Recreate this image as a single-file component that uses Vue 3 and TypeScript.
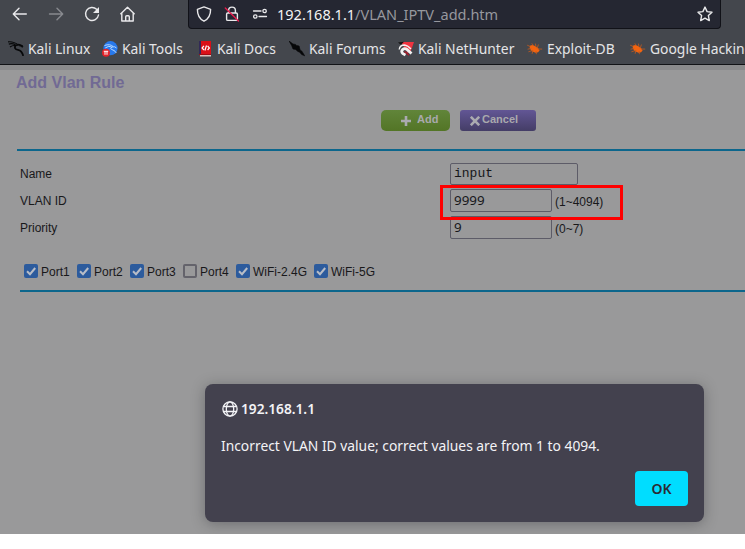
<script setup lang="ts">
import { ref } from 'vue'

interface Bookmark { label: string; icon: string; width: number }
interface Port { label: string; checked: boolean; width: number }

const bookmarks: Bookmark[] = [
  { label: 'Kali Linux', icon: 'dragon', width: 94 },
  { label: 'Kali Tools', icon: 'tools', width: 95 },
  { label: 'Kali Docs', icon: 'docs', width: 92 },
  { label: 'Kali Forums', icon: 'forums', width: 109 },
  { label: 'Kali NetHunter', icon: 'hunter', width: 129 },
  { label: 'Exploit-DB', icon: 'bug', width: 103 },
  { label: 'Google Hacking', icon: 'bug', width: 150 },
]
const ports = ref<Port[]>([
  { label: 'Port1', checked: true, width: 53 },
  { label: 'Port2', checked: true, width: 53 },
  { label: 'Port3', checked: true, width: 53 },
  { label: 'Port4', checked: false, width: 53 },
  { label: 'WiFi-2.4G', checked: true, width: 78 },
  { label: 'WiFi-5G', checked: true, width: 70 },
])
const name = ref('input')
const vlan = ref('9999')
const priority = ref('9')
</script>

<template>
  <div class="window">
    <header class="chrome">
      <div class="nav">
        <div class="nav-buttons">
          <svg viewBox="0 0 16 16"><path d="M14.3 8H1.5M7 2.2L1.3 8L7 13.8" /></svg>
          <svg class="disabled" viewBox="0 0 16 16"><path d="M1.5 8h13M9 2.2L14.7 8L9 13.8" /></svg>
          <svg viewBox="0 0 16 16"><path d="M12.6 3.3A6.5 6.5 0 1 0 14.5 9" /><path class="solid" d="M15 1v6H9z" /></svg>
          <svg viewBox="0 0 16 16"><path d="M.8 7.8L7.5 1.2l6.7 6.6M1.8 7v8h11.4V7M5.7 15v-4.2q0-1 1-1h1.6q1 0 1 1V15" /></svg>
        </div>
        <div class="urlbar">
          <svg class="shield" viewBox="0 0 16 16"><path d="M8 .9L14.6 3.3C14.7 9 12.6 13 8 15.2C3.4 13 1.3 9 1.4 3.3z" /></svg>
          <svg class="lock" viewBox="0 0 16 16"><path d="M4.6 7V4.5a3.4 3.4 0 0 1 6.8 0V7M3.8 7h8.4q1.2 0 1.2 1.2v5q0 1.2-1.2 1.2H3.8q-1.2 0-1.2-1.2v-5Q2.6 7 3.8 7z" /><path class="slash" d="M1.3 2l13.2 13" /></svg>
          <svg class="perm" viewBox="0 0 16 16"><path d="M1.5 5h7.5M7 10.5h7.5" /><circle cx="12.6" cy="5" r="1.7" /><circle cx="3.3" cy="10.5" r="1.7" /></svg>
          <div class="url"><span class="host">192.168.1.1</span>/VLAN_IPTV_add.htm</div>
          <svg class="star" viewBox="0 0 16 16"><path d="M8 1.1l2.1 4.5 4.9.6-3.6 3.4.9 5L8 12.2l-4.3 2.4.9-5L1 6.2l4.9-.6z" /></svg>
        </div>
      </div>
      <nav class="bookmarks">
        <div v-for="b in bookmarks" :key="b.label" class="bookmark" :style="{ width: b.width + 'px' }">
          <svg v-if="b.icon === 'dragon'" viewBox="0 0 16 16" fill="none" stroke="#070809">
            <path d="M0 .8Q6 .3 10.5 4.2M.8 3.1Q4 2 7.5 3.8M2 6Q5 3.8 8 4.8" stroke-width="1.2" />
            <path d="M7.6 3.9Q5.5 8.3 10 8.8Q14 9.5 15.2 14.9" stroke-width="1.8" />
            <path d="M8 4.5Q12 2.3 14.8 6.3M11.4 4.3l3.4.8" stroke-width="1.7" />
          </svg>
          <svg v-else-if="b.icon === 'tools'" viewBox="0 0 16 16">
            <circle cx="8.5" cy="7.2" r="7.1" fill="#2779ed" />
            <path d="M2.5 4.5Q8 2.5 11 5.5M3.2 7Q7 4 10 6.2Q7 8 11 9Q13.5 10 14.3 12M10 6q3-1 4.5 1" fill="none" stroke="#b8daff" stroke-width="1" />
            <circle cx="4" cy="11.8" r="4" fill="#e52228" />
            <path d="M1.8 10.3h4.4M3 10.3v3.5M5 10.3v3.5" stroke="#fff" />
          </svg>
          <svg v-else-if="b.icon === 'docs'" viewBox="0 0 16 16">
            <path d="M2 0h12v14H2z" fill="#d91018" /><path d="M2 0h2v14H2z" fill="#322a57" />
            <path d="M3 14h11v1.5H3z" fill="#d9bdb9" /><path d="M2 13h12v1H2z" fill="#9f0a13" />
            <path d="M6.9 4.8L5.1 7l1.8 2M10.6 4.8L12.4 7l-1.8 2M9.5 4.5l-1.6 5" fill="none" stroke="#fff" stroke-width="1.2" />
          </svg>
          <svg v-else-if="b.icon === 'forums'" viewBox="0 0 16 16">
            <path d="M0 0l4 3 2.5.4 1 1 2.6.6 1 4 1.8 1.2 2.8 4.6-3-1.2-2-2.4-2-.8-2-2L4 8 2.6 4.4z" fill="#060708" stroke="#060708" stroke-width=".6" />
          </svg>
          <svg v-else-if="b.icon === 'hunter'" viewBox="0 0 16 16">
            <path d="M3 1h13l-3.2 9-3 2z" fill="#ef3340" /><path d="M0 1.5l6-.8-3 3z" fill="#111" />
            <path d="M13.5 12.5L9 8.4Q6.6 6.8 4.6 8.6T5 12.7L7.5 14" fill="none" stroke="#f2f2f2" stroke-width="2.8" />
            <path d="M1.2 8.5Q1.8 4 6.5 4Q9.5 4.3 13 8" fill="none" stroke="#f2f2f2" stroke-width="1.3" />
            <path d="M6.5 10.5l4.5 3.7" stroke="#b11625" stroke-width="1.3" />
          </svg>
          <svg v-else viewBox="0 0 16 16">
            <path d="M2.8 4.8L5.2 4 8 5l3 2.2 1.6 2.4-1.5 1.6-2.5.6-3.8-1.5L2.8 7.6z" fill="#f36410" />
            <path d="M.2 4.2l3.2 1.4M.6 8.2l3.6-.7M1.4 10.8l4.4-1.4M4.8 2.4l2 2.7M8.4 2.6l.6 3.2M11.4 3.5l-1.2 4M11 8l4.2.1M6 9.4l-.9 3.4M9 10l.4 3.2" fill="none" stroke="#c75a1c" stroke-width=".8" />
          </svg>
          <span>{{ b.label }}</span>
        </div>
      </nav>
    </header>

    <main class="page">
      <h1>Add Vlan Rule</h1>
      <div class="actions">
        <button class="add"><svg viewBox="0 0 10 10"><path d="M5 0v10M0 5h10" /></svg>Add</button>
        <button class="cancel"><svg viewBox="0 0 10 10"><path d="M.8 .8l8.4 8.4M9.2 .8L.8 9.2" /></svg>Cancel</button>
      </div>
      <div class="rule top"></div>
      <form class="form" @submit.prevent>
        <label>Name</label>
        <div class="field"><input v-model="name" class="name"></div>
        <label>VLAN ID</label>
        <div class="field"><input v-model="vlan"><span>(1~4094)</span></div>
        <label>Priority</label>
        <div class="field"><input v-model="priority"><span>(0~7)</span></div>
      </form>
      <div class="ports">
        <div v-for="p in ports" :key="p.label" class="port" :style="{ width: p.width + 'px' }">
          <span class="box" :class="{ checked: p.checked }" @click="p.checked = !p.checked">
            <svg v-if="p.checked" viewBox="0 0 14 14"><path d="M3 7.2l3 3L11.2 4" /></svg>
          </span><span class="port-label">{{ p.label }}</span>
        </div>
      </div>
      <div class="rule bottom"></div>
    </main>

    <div class="highlight"></div>
    <section class="dialog" role="alertdialog">
      <div class="origin">
        <svg viewBox="0 0 16 16"><circle cx="8" cy="8" r="7.1" /><ellipse cx="8" cy="8" rx="3.7" ry="7.1" /><path d="M1.5 5.5h13M1.5 10.5h13" /></svg>
        <span>192.168.1.1</span>
      </div>
      <p>Incorrect VLAN ID value; correct values are from 1 to 4094.</p>
      <button class="ok">OK</button>
    </section>
  </div>
</template>

<style>
body { background: #fff; overflow: hidden; }
</style>
<style scoped>
* { box-sizing: border-box; }
svg { display: block; flex: none; }
button { border: 0; padding: 0; }
.window { position: relative; width: 745px; height: 534px; overflow: hidden; background: #99999a; }
.chrome { height: 65px; background: #44474d; border-bottom: 1px solid #121316; font-family: "Noto Sans", sans-serif; color: #e4e5e7; }
.nav { height: 33px; display: flex; }
.nav-buttons { width: 188px; height: 28px; padding-left: 12px; display: flex; gap: 20px; align-items: center; }
.nav svg { width: 16px; height: 16px; fill: none; stroke: #e9e9eb; stroke-width: 1.4; stroke-linejoin: round; stroke-linecap: round; }
.nav svg.disabled { stroke: #888a8f; }
.nav svg .solid { fill: #e9e9eb; stroke: none; }
.nav svg .slash { stroke: #e51c4c; }
.urlbar { width: 533px; height: 29px; padding: 0 7px; display: flex; align-items: center; background: #252732; border: 1px solid #111218; border-top: 0; border-radius: 0 0 4px 4px; }
.lock { margin-left: 12px; }
.nav .perm { margin-left: 12px; stroke-width: 1.3; }
.url { margin-left: 9px; flex: 1; font-size: 14.53px; line-height: 28px; padding-bottom: 1px; color: #96979e; white-space: nowrap; }
.host { color: #f4f4f5; }
.bookmarks { height: 31px; padding-left: 8px; display: flex; align-items: center; }
.bookmark { flex: none; display: flex; align-items: center; gap: 4px; font-size: 13.86px; line-height: 20px; white-space: nowrap; }
.bookmark svg { width: 16px; height: 16px; }
.page { height: 469px; border-top: 5px solid #8b8b8c; font-family: "Liberation Sans", sans-serif; font-size: 12px; color: #18181a; }
h1 { margin: 0; padding: 4px 0 0 16px; height: 40px; font-size: 16px; line-height: 18px; color: #716a94; }
.actions { padding-left: 381px; height: 21px; display: flex; gap: 10px; }
.actions button { display: flex; align-items: center; height: 21px; border-radius: 5px; color: #a9a9ad; font: bold 11px/17px "Liberation Sans", sans-serif; padding-bottom: 2px; }
.actions svg { width: 10px; height: 10px; fill: none; stroke: #aaaab0; stroke-width: 2.6; margin-top: 2px; }
.actions .add { width: 69px; padding-left: 20px; gap: 6px; background: linear-gradient(#61853a, #537526); }
.actions .cancel { width: 76px; padding-left: 10px; gap: 2px; border-radius: 3px; background: linear-gradient(#625695, #443d66); }
.rule { height: 2px; background: #0c668c; }
.top { margin: 18px 0 0 17px; }
.bottom { margin-left: 20px; }
.form { margin: 9px 0 0 20px; display: grid; grid-template-columns: 430px 1fr; grid-auto-rows: 27px; align-items: center; line-height: 14px; }
.field { display: flex; align-items: center; gap: 3px; }
.field span { padding-top: 2px; }
input { width: 102px; height: 23px; padding: 0 3px 1px; margin: 0; border: 1px solid #5d5c68; border-radius: 2px; background: #99999a; color: #17171a; outline: 0; font: 13.4px "Noto Sans", sans-serif; }
input.name { width: 128px; height: 22px; padding: 0 3px; font: 13px "Liberation Mono", monospace; }
.ports { margin: 23px 0 0 24px; height: 26px; display: flex; }
.port { display: flex; align-items: center; gap: 3px; height: 14px; white-space: nowrap; }
.port-label { line-height: 14px; padding-top: 2px; }
.box { width: 14px; height: 14px; border: 2px solid #64636b; border-radius: 2px; flex: none; }
.box.checked { border: 0; background: #2c5b9d; }
.box svg { fill: none; stroke: #b8bdc7; stroke-width: 2; }
.highlight { position: absolute; left: 440px; top: 185px; width: 183px; height: 35px; border: 3px solid #ff0000; }
.dialog { position: absolute; left: 205px; top: 384px; width: 499px; height: 138px; padding: 16px; border-radius: 8px; background: #43414e; color: #f3f3f6; box-shadow: 0 2px 14px rgba(30, 30, 35, .35); font-family: "Noto Sans", sans-serif; font-size: 13.83px; }
.origin { display: flex; align-items: center; gap: 3px; height: 18px; padding-left: 1px; font-weight: 600; font-size: 13.7px; }
.origin svg { width: 16px; height: 16px; fill: none; stroke: #f3f3f6; stroke-width: 1.3; }
.origin span { line-height: 16px; padding-bottom: 1px; }
p { margin: 18px 0 0; height: 20px; line-height: 20px; white-space: nowrap; }
.ok { display: block; margin: 15px 0 0 auto; width: 53px; height: 35px; border-radius: 4px; background: #00ddff; color: #2b2a33; font: 600 14px "Noto Sans", sans-serif; }
</style>
